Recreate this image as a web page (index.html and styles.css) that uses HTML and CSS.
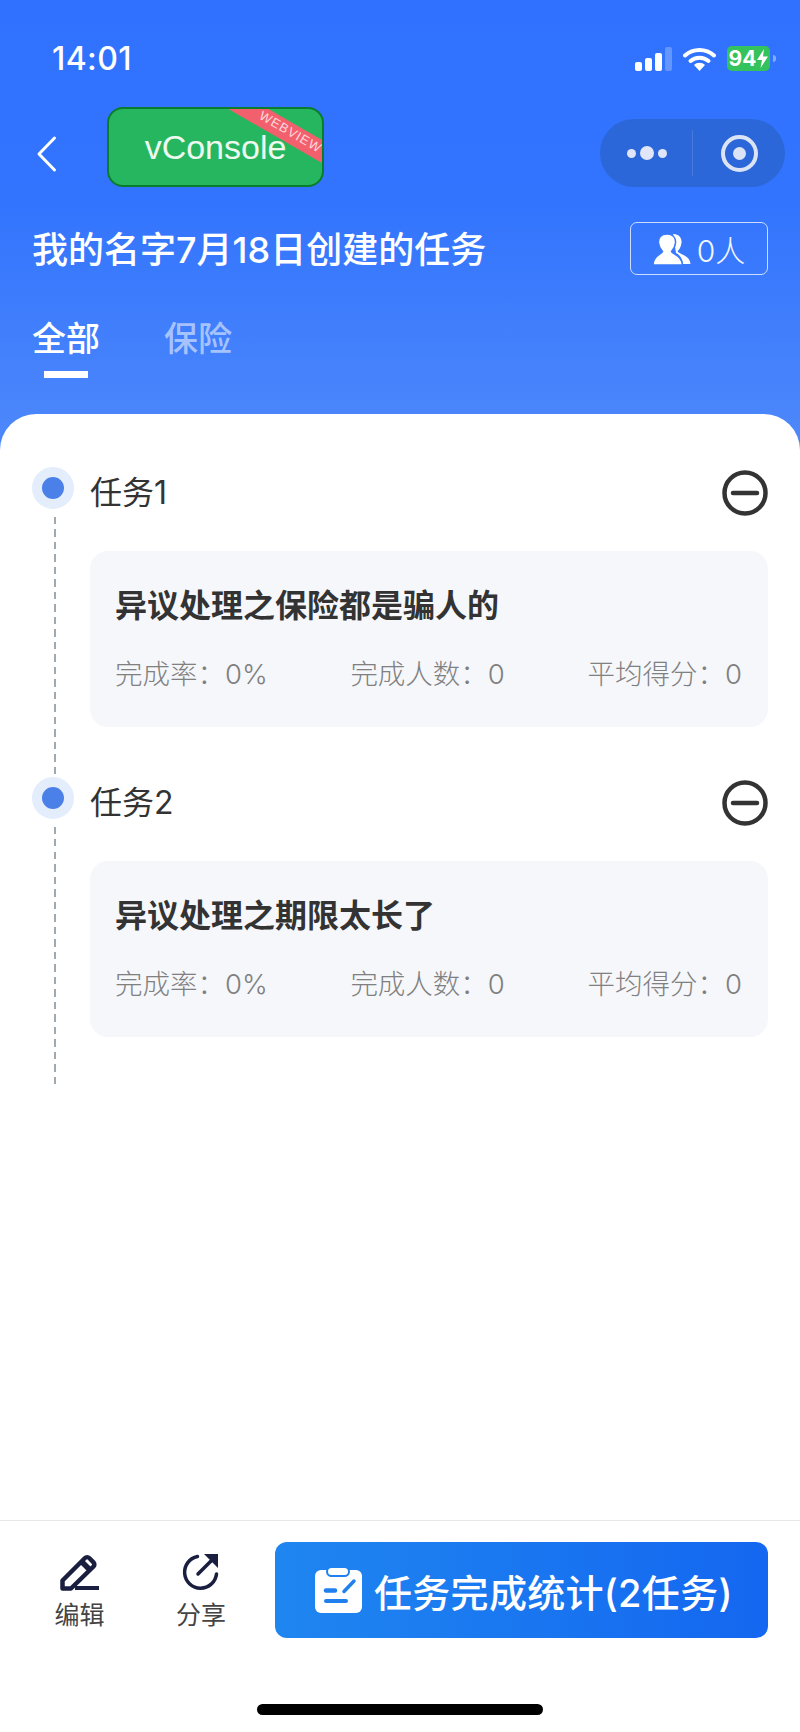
FILE: index.html
```html
<!DOCTYPE html>
<html lang="zh-CN">
<head>
    <meta charset="UTF-8">
    <meta name="viewport" content="width=device-width, initial-scale=1.0">
    <title>任务</title>
    <link rel="stylesheet" href="styles.css">
</head>
<body>
    <div class="page">
        <div class="statusBar">
            <span class="time">14:01</span>
            <div class="statusIcons">
                <svg class="signal" width="37" height="24" viewBox="0 0 37 24">
                    <rect x="0" y="15" width="7" height="9" rx="2" fill="#fff"/>
                    <rect x="10" y="11" width="7" height="13" rx="2" fill="#fff"/>
                    <rect x="20" y="6" width="7" height="18" rx="2" fill="#fff"/>
                    <rect x="30" y="0" width="7" height="24" rx="2" fill="#fff" opacity="0.25"/>
                </svg>
                <svg class="wifi" width="33" height="24" viewBox="0 0 33 24">
                    <path d="M2 8.500C10 1 23 1 31 8.500" fill="none" stroke="#fff" stroke-width="4" stroke-linecap="round"/>
                    <path d="M7.500 14C12.500 9.500 20.500 9.500 25.500 14" fill="none" stroke="#fff" stroke-width="4" stroke-linecap="round"/>
                    <path d="M11 18C14 15 19 15 22 18L16.500 24Z" fill="#fff"/>
                </svg>
                <div class="battery">
                    <span>94</span>
                    <svg width="11" height="19" viewBox="0 0 11 19"><path d="M7 0L0 11H5L3.500 19L11 7.500H6Z" fill="#fff"/></svg>
                </div>
                <span class="batteryTip"></span>
            </div>
        </div>

        <div class="nav">
            <svg class="back" width="22" height="38" viewBox="0 0 22 38">
                <path d="M18.500 3L3 19L18.500 35" fill="none" stroke="#fff" stroke-width="3" stroke-linecap="round" stroke-linejoin="round"/>
            </svg>
            <div class="vconsole">
                vConsole
                <span class="ribbon">WEBVIEW</span>
            </div>
            <div class="capsule">
                <div class="capsuleDots">
                    <span class="dotSmall"></span>
                    <span class="dotBig"></span>
                    <span class="dotSmall"></span>
                </div>
                <span class="capsuleLine"></span>
                <div class="capsuleTarget"><span></span></div>
            </div>
        </div>

        <div class="titleRow">
            <h1>我的名字7月18日创建的任务</h1>
            <div class="people">
                <svg width="38" height="32" viewBox="0 0 38 32">
                    <path d="M20 1C27 1 29 6 28.500 10C28 14 26 17 24.500 18C25 21 37 22 37.500 31H30C29 25 27 22 23 20Z" fill="#fff"/>
                    <path d="M14 1C20 1 23 5 22.500 10C22 14 20 17 18.500 18.500C19 21 29 22 29.500 32H0C0 22 9 21 9.500 18.500C8 17 6 14 5.500 10C5 5 8 1 14 1Z" fill="#fff" stroke="#3b79fd" stroke-width="1.500"/>
                </svg>
                <span>0人</span>
            </div>
        </div>

        <div class="tabs">
            <div class="tab active">全部<i></i></div>
            <div class="tab">保险</div>
        </div>

        <div class="panel">
            <div class="task">
                <div class="rail">
                    <span class="dot"></span>
                    <span class="railLine"></span>
                </div>
                <div class="taskBody">
                    <div class="taskHead">
                        <h2>任务1</h2>
                        <svg width="46" height="46" viewBox="0 0 46 46">
                            <circle cx="23" cy="23" r="20.500" fill="none" stroke="#333" stroke-width="4.500"/>
                            <path d="M11 23H35" stroke="#333" stroke-width="4.500" stroke-linecap="round"/>
                        </svg>
                    </div>
                    <div class="card">
                        <h3>异议处理之保险都是骗人的</h3>
                        <div class="stats">
                            <span>完成率：0%</span>
                            <span>完成人数：0</span>
                            <span>平均得分：0</span>
                        </div>
                    </div>
                </div>
            </div>

            <div class="task">
                <div class="rail">
                    <span class="dot"></span>
                    <span class="railLine"></span>
                </div>
                <div class="taskBody">
                    <div class="taskHead">
                        <h2>任务2</h2>
                        <svg width="46" height="46" viewBox="0 0 46 46">
                            <circle cx="23" cy="23" r="20.500" fill="none" stroke="#333" stroke-width="4.500"/>
                            <path d="M11 23H35" stroke="#333" stroke-width="4.500" stroke-linecap="round"/>
                        </svg>
                    </div>
                    <div class="card">
                        <h3>异议处理之期限太长了</h3>
                        <div class="stats">
                            <span>完成率：0%</span>
                            <span>完成人数：0</span>
                            <span>平均得分：0</span>
                        </div>
                    </div>
                </div>
            </div>
        </div>

        <div class="footer">
            <div class="footerRow">
                <div class="action">
                    <svg width="40" height="38" viewBox="0 0 40 38">
                        <path d="M2.500 35.500V27.500L25 5A3 3 0 0 1 29.200 5L33.500 9.300A3 3 0 0 1 33.500 13.500L11 35.500Z" fill="none" stroke="#1b1f3f" stroke-width="4.500" stroke-linejoin="round"/>
                        <path d="M22 9L30 17" stroke="#1b1f3f" stroke-width="5.500"/>
                        <path d="M15 35H39" stroke="#1b1f3f" stroke-width="4"/>
                    </svg>
                    <span>编辑</span>
                </div>
                <div class="action share">
                    <svg width="38" height="38" viewBox="0 0 38 38">
                        <path d="M15.500 3.500A16 16 0 1 0 34.500 21" fill="none" stroke="#1b1f3f" stroke-width="3.500" stroke-linecap="round"/>
                        <path d="M16 21L29 8" stroke="#1b1f3f" stroke-width="3.500" stroke-linecap="round"/>
                        <path d="M22 1H36V15Z" fill="#1b1f3f"/>
                    </svg>
                    <span>分享</span>
                </div>
                <div class="statBtn">
                    <svg width="47" height="47" viewBox="0 0 47 47">
                        <rect x="0" y="3" width="47" height="43" rx="6" fill="#fff"/>
                        <rect x="12" y="0" width="22" height="9" rx="4.500" fill="#fff" stroke="#1f80ee" stroke-width="2"/>
                        <path d="M11 23.500H20" stroke="#1f80ee" stroke-width="4.500" stroke-linecap="round"/>
                        <path d="M11 34H31" stroke="#1f80ee" stroke-width="4" stroke-linecap="round"/>
                        <path d="M29 24.500L39 14" stroke="#1f80ee" stroke-width="3.500" stroke-linecap="round"/>
                    </svg>
                    <span>任务完成统计(2任务)</span>
                </div>
            </div>
            <div class="homeBar"></div>
        </div>
    </div>
</body>
</html>
```

FILE: styles.css
```css
*{
    padding: 0px;
    margin: 0px;
    box-sizing: border-box;
}
body{
    font-family: "Inter", "Noto Sans CJK SC", sans-serif;
    background-color: white;
}
.page{
    display: flex;
    flex-direction: column;
    width: 800px;
    height: 1732px;
    overflow: hidden;
    background: linear-gradient(#3072ff 0px, #3274fe 200px, #4f89fa 460px) no-repeat;
    background-size: 100% 460px;
}

/* status bar */
.statusBar{
    display: flex;
    justify-content: space-between;
    align-items: flex-start;
    height: 107px;
    padding: 46px 24px 0px 52px;
    color: white;
}
.time{
    font-size: 32px;
    font-weight: 500;
    line-height: 26px;
    letter-spacing: 0.4px;
}
.statusIcons{
    display: flex;
    align-items: center;
    height: 25px;
}
.wifi{
    margin-left: 11px;
}
.battery{
    display: flex;
    align-items: center;
    justify-content: center;
    gap: 1px;
    width: 43px;
    height: 25px;
    margin-left: 11px;
    background-color: #34c25c;
    border-radius: 5px;
    font-size: 21px;
    font-weight: 700;
}
.batteryTip{
    width: 3px;
    height: 7px;
    margin-left: 3px;
    background-color: rgba(255,255,255,0.4);
    border-radius: 0px 3px 3px 0px;
}

/* nav */
.nav{
    display: flex;
    align-items: flex-start;
    height: 80px;
    padding-left: 36px;
}
.back{
    margin-top: 28px;
}
.vconsole{
    position: relative;
    overflow: hidden;
    display: flex;
    align-items: center;
    justify-content: center;
    width: 217px;
    height: 80px;
    margin-left: 49px;
    background-color: #27b660;
    border: 2px solid #0a7d2c;
    border-radius: 16px;
    color: #eefaf0;
    font-family: "Liberation Sans", sans-serif;
    font-size: 34px;
}
.ribbon{
    position: absolute;
    top: 14px;
    left: 101px;
    width: 160px;
    height: 20px;
    background-color: #f2606e;
    color: #ffd8dc;
    font-size: 13px;
    line-height: 17px;
    letter-spacing: 1px;
    text-align: center;
    transform: rotate(30deg);
}
.capsule{
    display: flex;
    align-items: center;
    width: 185px;
    height: 68px;
    margin-top: 12px;
    margin-left: auto;
    margin-right: 15px;
    background-color: #2b67d8;
    border-radius: 34px;
}
.capsuleDots{
    display: flex;
    align-items: center;
    gap: 4px;
    width: 92px;
    padding-left: 27px;
}
.dotSmall{
    width: 9px;
    height: 9px;
    background-color: #e0e6f7;
    border-radius: 50%;
}
.dotBig{
    width: 14px;
    height: 14px;
    background-color: #e0e6f7;
    border-radius: 50%;
}
.capsuleLine{
    width: 1px;
    height: 46px;
    background-color: rgba(255,255,255,0.13);
}
.capsuleTarget{
    display: flex;
    align-items: center;
    justify-content: center;
    width: 37px;
    height: 37px;
    margin-left: 28px;
    border: 4px solid #dbe3f6;
    border-radius: 50%;
}
.capsuleTarget span{
    width: 13px;
    height: 13px;
    background-color: #dbe3f6;
    border-radius: 50%;
}

/* title */
.titleRow{
    display: flex;
    justify-content: space-between;
    align-items: center;
    height: 53px;
    margin-top: 35px;
    padding: 0px 32px 0px 32px;
}
.titleRow h1{
    padding-bottom: 4px;
    color: white;
    font-size: 36px;
    font-weight: 500;
}
.people{
    display: flex;
    align-items: center;
    justify-content: center;
    gap: 6px;
    width: 138px;
    height: 53px;
    border: 1px solid rgba(255,255,255,0.75);
    border-radius: 7px;
    color: #f2f6ff;
    font-size: 30px;
    font-weight: 300;
}

/* tabs */
.tabs{
    display: flex;
    gap: 64px;
    height: 139px;
    padding: 42px 0px 0px 32px;
}
.tab{
    display: flex;
    flex-direction: column;
    align-items: center;
    color: rgba(255,255,255,0.55);
    font-size: 34px;
    font-weight: 500;
    line-height: 44px;
}
.tab.active{
    color: white;
}
.tab i{
    width: 44px;
    height: 7px;
    margin-top: 10px;
    background-color: white;
}

/* task list */
.panel{
    flex: 1;
    padding: 53px 32px 0px;
    background-color: white;
    border-radius: 36px 36px 0px 0px;
}
.task{
    display: flex;
    gap: 16px;
}
.rail{
    display: flex;
    flex-direction: column;
    width: 42px;
}
.dot{
    width: 42px;
    height: 42px;
    background-color: #4a80e8;
    border: 10.5px solid #e3edfb;
    border-radius: 50%;
}
.railLine{
    flex: 1;
    width: 1.5px;
    margin-top: 8px;
    margin-left: 22px;
    background: repeating-linear-gradient(#a0a9b0 0px, #a0a9b0 7px, transparent 7px, transparent 12.5px);
}
.taskBody{
    flex: 1;
    padding-bottom: 50px;
}
.taskHead{
    display: flex;
    justify-content: space-between;
    align-items: flex-start;
    height: 84px;
}
.taskHead h2{
    padding-top: 5px;
    color: #333;
    font-size: 32px;
    font-weight: 400;
    line-height: 42px;
}
.taskHead svg{
    margin-top: 3px;
}
.card{
    height: 176px;
    padding: 35px 26px 0px 25px;
    background-color: #f6f7fb;
    border-radius: 18px;
}
.card h3{
    color: #333;
    font-size: 32px;
    font-weight: 600;
    line-height: 40px;
}
.stats{
    display: flex;
    justify-content: space-between;
    margin-top: 28px;
    color: #808080;
    font-size: 27.500px;
    font-weight: 300;
    line-height: 40px;
}

/* footer */
.footer{
    height: 212px;
    padding-top: 21px;
    background-color: white;
    border-top: 1px solid #e8e8e8;
}
.footerRow{
    display: flex;
    height: 96px;
    padding-left: 19px;
}
.action{
    display: flex;
    flex-direction: column;
    align-items: center;
    width: 121px;
    padding-top: 11px;
    color: #444;
    font-size: 25px;
    line-height: 30px;
}
.action.share{
    width: 122px;
}
.action span{
    margin-top: 9px;
}
.statBtn{
    display: flex;
    align-items: center;
    width: 493px;
    height: 96px;
    margin-left: 13px;
    padding-left: 40px;
    background: linear-gradient(90deg, #1f86f0, #1467f0);
    border-radius: 12px;
    color: white;
    font-size: 38px;
    font-weight: 500;
    letter-spacing: 0.3px;
}
.statBtn span{
    margin-left: 12px;
}
.homeBar{
    width: 286px;
    height: 11px;
    margin: 66px auto 0px;
    background-color: black;
    border-radius: 6px;
}
```
